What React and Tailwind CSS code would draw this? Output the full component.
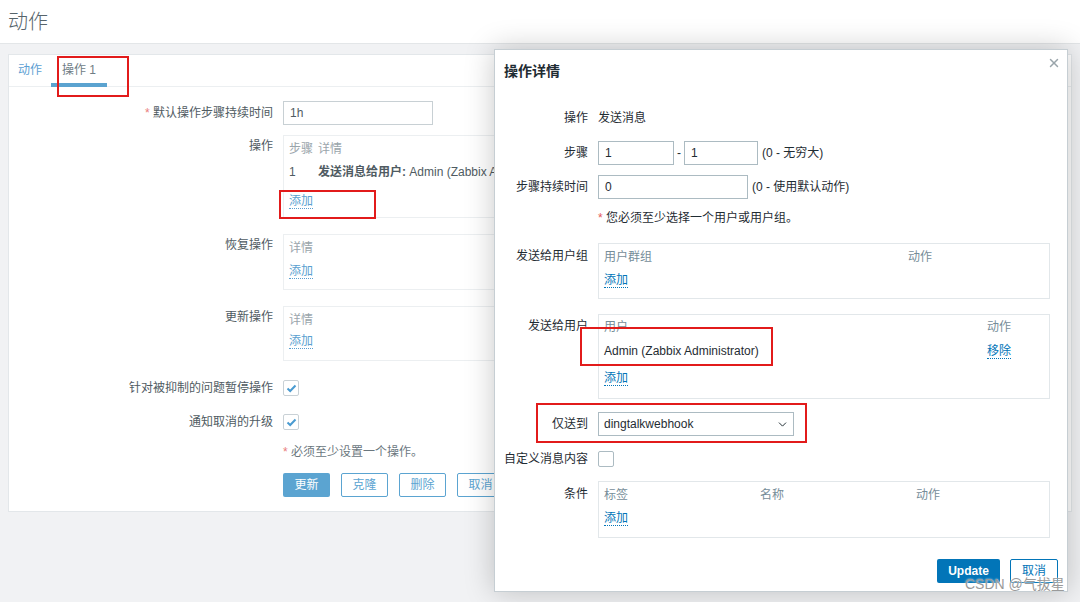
import React from "react";
import { ChevronDown, X } from "lucide-react";

const MLink = ({ children, c = "main" }) => (
  <span
    className={
      c === "main"
        ? "inline-block leading-[14px] text-[#5a9fd0] border-b border-dotted border-[#5a9fd0]"
        : "inline-block leading-[14px] text-[#0275b8] border-b border-dotted border-[#0275b8]"
    }
  >
    {children}
  </span>
);

const Check = () => (
  <div className="w-[16px] h-[16px] border border-[#c9d1d6] rounded-[2px] bg-white flex items-center justify-center">
    <svg width="11" height="9" viewBox="0 0 11 9">
      <path d="M1.5 4.5 L4.2 7 L9.5 1.5" fill="none" stroke="#4a9bd1" strokeWidth="2" />
    </svg>
  </div>
);

function MainRow({ label, children, labelPt = "pt-0", center = false }) {
  return (
    <div className={"flex " + (center ? "items-center" : "items-start")}>
      <div className={"w-[264px] text-right pr-0 text-[#4f5b62] " + labelPt}>{label}</div>
      <div className="ml-[10px]">{children}</div>
    </div>
  );
}

function MRow({ label, children, center = true, labelPt = "" }) {
  return (
    <div className={"flex " + (center ? "items-center" : "items-start")}>
      <div className={"w-[84px] text-right text-[#1f2c33] " + labelPt}>{label}</div>
      <div className="ml-[10px] flex-1">{children}</div>
    </div>
  );
}

export default function App() {
  return (
    <div className="relative w-[1080px] h-[602px] overflow-hidden bg-[#f1f2f4] font-['Liberation_Sans','Noto_Sans_CJK_SC',sans-serif] text-[12px] leading-[15px]">
      {/* header */}
      <div className="h-[44px] bg-white border-b border-[#e3e6e8] flex items-center pl-[8px]">
        <span className="text-[20px] leading-[24px] text-[#56646b] font-light">动作</span>
      </div>

      {/* main card */}
      <div className="ml-[8px] mt-[10px] w-[1064px] bg-white border border-[#e3e7ea]">
        <div className="h-[32px] border-b border-[#eceff1] flex items-end">
          <div className="px-[9px] h-full flex items-center text-[#5da0d3]">动作</div>
          <div className="px-[11px] h-full flex flex-col justify-center relative">
            <span className="text-[#6f7d85]">操作 1</span>
            <div className="absolute left-0 right-0 bottom-[-1px] h-[4px] bg-[#5ba3d0]"></div>
          </div>
        </div>

        <div className="pt-[14px] pb-[14px]">
          <MainRow label={<><span className="text-[#e97c7c]">* </span>默认操作步骤持续时间</>} center>
            <div className="w-[150px] h-[24px] border border-[#c8d0d4] px-[6px] flex items-center text-[#4f5b62]">1h</div>
          </MainRow>

          <div className="mt-[10px]">
            <MainRow label="操作" labelPt="pt-[4px]">
              <div className="w-[520px] h-[83px] border border-[#eceff1] pl-[5px] pt-[6px]">
                <div className="flex text-[#9aa5ab] h-[16px]">
                  <span className="w-[29px]">步骤</span>
                  <span>详情</span>
                </div>
                <div className="flex mt-[7px] h-[16px] text-[#4f5b62]">
                  <span className="w-[29px]">1</span>
                  <span className="whitespace-nowrap"><b className="font-bold">发送消息给用户:</b> Admin (Zabbix Administrator)</span>
                </div>
                <div className="mt-[13px]"><MLink>添加</MLink></div>
              </div>
            </MainRow>
          </div>

          <div className="mt-[16px]">
            <MainRow label="恢复操作" labelPt="pt-[4px]">
              <div className="w-[520px] h-[56px] border border-[#eceff1] pl-[5px] pt-[6px]">
                <div className="text-[#9aa5ab] h-[16px]">详情</div>
                <div className="mt-[7px]"><MLink>添加</MLink></div>
              </div>
            </MainRow>
          </div>

          <div className="mt-[16px]">
            <MainRow label="更新操作" labelPt="pt-[4px]">
              <div className="w-[520px] h-[55px] border border-[#eceff1] pl-[5px] pt-[6px]">
                <div className="text-[#9aa5ab] h-[16px]">详情</div>
                <div className="mt-[5px]"><MLink>添加</MLink></div>
              </div>
            </MainRow>
          </div>

          <div className="mt-[19px]">
            <MainRow label="针对被抑制的问题暂停操作" center>
              <Check />
            </MainRow>
          </div>
          <div className="mt-[18px]">
            <MainRow label="通知取消的升级" center>
              <Check />
            </MainRow>
          </div>
          <div className="mt-[15px]">
            <MainRow label="">
              <span className="text-[#6b777e]"><span className="text-[#e97c7c]">*</span> 必须至少设置一个操作。</span>
            </MainRow>
          </div>
          <div className="mt-[13px]">
            <MainRow label="">
              <div className="flex gap-[11px]">
                <div className="w-[47px] h-[24px] bg-[#5ba4d1] text-white flex items-center justify-center rounded-[2px]">更新</div>
                <div className="w-[47px] h-[24px] border border-[#5ba4d1] text-[#5ba4d1] flex items-center justify-center rounded-[2px]">克隆</div>
                <div className="w-[47px] h-[24px] border border-[#5ba4d1] text-[#5ba4d1] flex items-center justify-center rounded-[2px]">删除</div>
                <div className="w-[47px] h-[24px] border border-[#5ba4d1] text-[#5ba4d1] flex items-center justify-center rounded-[2px]">取消</div>
              </div>
            </MainRow>
          </div>
        </div>
      </div>

      {/* annotation boxes on main page */}
      <div className="absolute left-[57px] top-[56px] w-[72px] h-[41px] border-2 border-[#e21b1b]"></div>
      <div className="absolute left-[279px] top-[190px] w-[97px] h-[29px] border-2 border-[#e21b1b]"></div>

      {/* modal */}
      <div className="absolute left-[494px] top-[49px] w-[574px] h-[543px] bg-white border border-[#c6ced3] shadow-[0_0_28px_rgba(0,0,0,0.22)] pl-[9px] pr-[17px] pt-[13px]">
        <div className="absolute right-[6px] top-[6px] text-[#9aa5ab]">
          <X size={14} strokeWidth={2.5} />
        </div>
        <div className="text-[14px] leading-[16px] font-bold text-[#1f2c33]">操作详情</div>

        <div className="mt-[27px]">
          <MRow label="操作">
            <div className="h-[24px] flex items-center text-[#1f2c33]">发送消息</div>
          </MRow>
        </div>
        <div className="mt-[11px]">
          <MRow label="步骤">
            <div className="flex items-center text-[#1f2c33]">
              <div className="w-[76px] h-[24px] border border-[#acbbc2] px-[6px] flex items-center">1</div>
              <span className="mx-[3px]">-</span>
              <div className="w-[74px] h-[24px] border border-[#acbbc2] px-[6px] flex items-center">1</div>
              <span className="ml-[4px]">(0 - 无穷大)</span>
            </div>
          </MRow>
        </div>
        <div className="mt-[10px]">
          <MRow label="步骤持续时间">
            <div className="flex items-center text-[#1f2c33]">
              <div className="w-[150px] h-[24px] border border-[#acbbc2] px-[6px] flex items-center">0</div>
              <span className="ml-[4px]">(0 - 使用默认动作)</span>
            </div>
          </MRow>
        </div>
        <div className="mt-[12px]">
          <MRow label="">
            <span className="text-[#1f2c33]"><span className="text-[#e45959]">*</span> 您必须至少选择一个用户或用户组。</span>
          </MRow>
        </div>

        <div className="mt-[17px]">
          <MRow label="发送给用户组" center={false} labelPt="pt-[6px]">
            <div className="w-[452px] h-[56px] border border-[#e2e7ea] pl-[5px] pt-[6px]">
              <div className="flex text-[#768d99] h-[16px]">
                <span className="w-[304px]">用户群组</span>
                <span>动作</span>
              </div>
              <div className="mt-[7px]"><MLink c="m">添加</MLink></div>
            </div>
          </MRow>
        </div>

        <div className="mt-[15px]">
          <MRow label="发送给用户" center={false} labelPt="pt-[5px]">
            <div className="w-[452px] h-[85px] border border-[#e2e7ea] pl-[5px] pt-[5px]">
              <div className="flex text-[#768d99] h-[16px]">
                <span className="w-[383px]">用户</span>
                <span>动作</span>
              </div>
              <div className="flex mt-[7px] h-[16px] items-center">
                <span className="w-[383px] text-[#1f2c33]">Admin (Zabbix Administrator)</span>
                <MLink c="m">移除</MLink>
              </div>
              <div className="mt-[12px]"><MLink c="m">添加</MLink></div>
            </div>
          </MRow>
        </div>

        <div className="mt-[13px]">
          <MRow label="仅送到">
            <div className="w-[196px] h-[24px] border border-[#acbbc2] pl-[5px] pr-[4px] flex items-center justify-between text-[#1f2c33]">
              <span>dingtalkwebhook</span>
              <ChevronDown size={13} strokeWidth={1.8} color="#1f2c33" />
            </div>
          </MRow>
        </div>

        <div className="mt-[11px]">
          <MRow label="自定义消息内容">
            <div className="h-[24px] flex items-center">
              <div className="w-[16px] h-[16px] border border-[#acbbc2] rounded-[2px]"></div>
            </div>
          </MRow>
        </div>

        <div className="mt-[10px]">
          <MRow label="条件" center={false} labelPt="pt-[6px]">
            <div className="w-[452px] h-[57px] border border-[#e2e7ea] pl-[5px] pt-[6px]">
              <div className="flex text-[#768d99] h-[16px]">
                <span className="w-[156px]">标签</span>
                <span className="w-[156px]">名称</span>
                <span>动作</span>
              </div>
              <div className="mt-[7px]"><MLink c="m">添加</MLink></div>
            </div>
          </MRow>
        </div>

        <div className="mt-[21px] flex justify-end gap-[10px] mr-[-8px]">
          <div className="w-[63px] h-[24px] bg-[#0275b8] text-white font-bold flex items-center justify-center rounded-[2px]">Update</div>
          <div className="w-[48px] h-[24px] border border-[#0275b8] text-[#0275b8] flex items-center justify-center rounded-[2px]">取消</div>
        </div>

        {/* annotation boxes in modal */}
        <div className="absolute left-[85px] top-[277px] w-[193px] h-[39px] border-2 border-[#e21b1b]"></div>
        <div className="absolute left-[41px] top-[353px] w-[271px] h-[40px] border-2 border-[#e21b1b]"></div>
      </div>

      {/* watermark */}
      <div className="absolute left-[965px] top-[576px] text-[14px] leading-[17px] text-[#9a9a9a] [text-shadow:0_0_2px_#ffffff] whitespace-nowrap">
        CSDN @气拔星
      </div>
    </div>
  );
}
